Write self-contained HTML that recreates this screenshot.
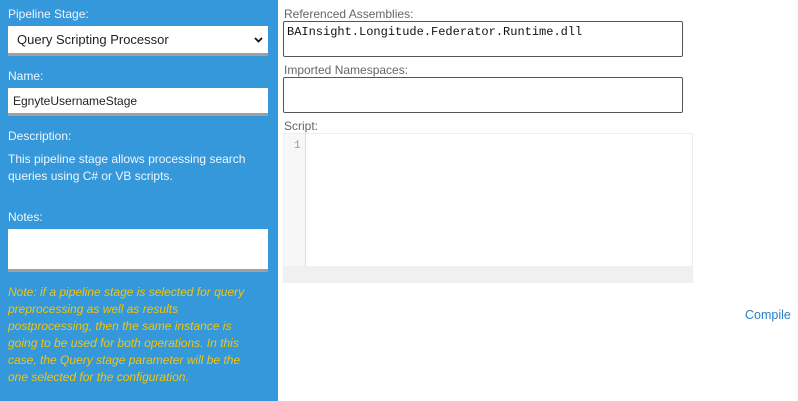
<!DOCTYPE html>
<html><head><meta charset="utf-8"><style>
*{box-sizing:border-box;margin:0;padding:0}
body{width:798px;height:401px;background:#fff;font-family:"Liberation Sans",sans-serif;position:relative;overflow:hidden}
.left{position:absolute;left:0;top:0;width:278px;height:401px;background:#3498db}
.a{position:absolute;font-size:12px;line-height:14px;white-space:nowrap}
.lbl{color:#f0f6fc}
.box{position:absolute;background:#fff;border-bottom:3px solid #a0a0a0}
.note{color:#f1c40f;font-style:italic;font-size:12px;line-height:17px;position:absolute;left:8px;top:284px;white-space:nowrap}
.r{color:#666;font-size:12px}
.rb{position:absolute;border:1px solid #555;border-radius:2px;background:#fff}
</style></head><body>
<div class="left"></div>
<div class="a lbl" style="left:8px;top:7px">Pipeline Stage:</div>
<div class="box" style="left:8px;top:26px;width:260px;height:30px"><span class="a" style="left:9px;top:7px;font-size:13px;color:#222">Query Scripting Processor</span>
<svg style="position:absolute;left:246px;top:11px" width="9" height="6" viewBox="0 0 9 6"><path d="M1 1 L4.5 4.5 L8 1" stroke="#111" stroke-width="1.8" fill="none"/></svg></div>
<div class="a lbl" style="left:8px;top:69px">Name:</div>
<div class="box" style="left:8px;top:88px;width:260px;height:28px"><span class="a" style="left:5px;top:6px;color:#222">EgnyteUsernameStage</span></div>
<div class="a lbl" style="left:8px;top:129px">Description:</div>
<div class="a lbl" style="left:8px;top:151px;line-height:17px">This pipeline stage allows processing search<br>queries using C# or VB scripts.</div>
<div class="a lbl" style="left:8px;top:210px">Notes:</div>
<div class="box" style="left:8px;top:229px;width:260px;height:43px"></div>
<div class="note">Note: if a pipeline stage is selected for query<br>preprocessing as well as results<br>postprocessing, then the same instance is<br>going to be used for both operations. In this<br>case, the Query stage parameter will be the<br>one selected for the configuration.</div>

<div class="a r" style="left:284px;top:7px">Referenced Assemblies:</div>
<div class="rb" style="left:283px;top:21px;width:400px;height:36px"><span style="position:absolute;left:3px;top:3px;font-family:'Liberation Mono',monospace;font-size:12px;color:#111">BAInsight.Longitude.Federator.Runtime.dll</span></div>
<div class="a r" style="left:284px;top:63px">Imported Namespaces:</div>
<div class="rb" style="left:283px;top:77px;width:400px;height:36px"></div>
<div class="a r" style="left:284px;top:119px">Script:</div>
<div style="position:absolute;left:283px;top:133px;width:410px;height:150px;border:1px solid #eee;background:#fff">
<div style="position:absolute;left:0;top:0;width:22px;height:132px;background:#f7f7f7;border-right:1px solid #ddd"></div>
<span style="position:absolute;left:10px;top:6px;font-family:'Liberation Mono',monospace;font-size:11px;color:#999">1</span>
<div style="position:absolute;left:0;top:132px;width:408px;height:17px;background:#f0f0f0"></div>
</div>
<div class="a" style="left:745px;top:308px;color:#2a7ec6;font-size:12.5px">Compile</div>
</body></html>
